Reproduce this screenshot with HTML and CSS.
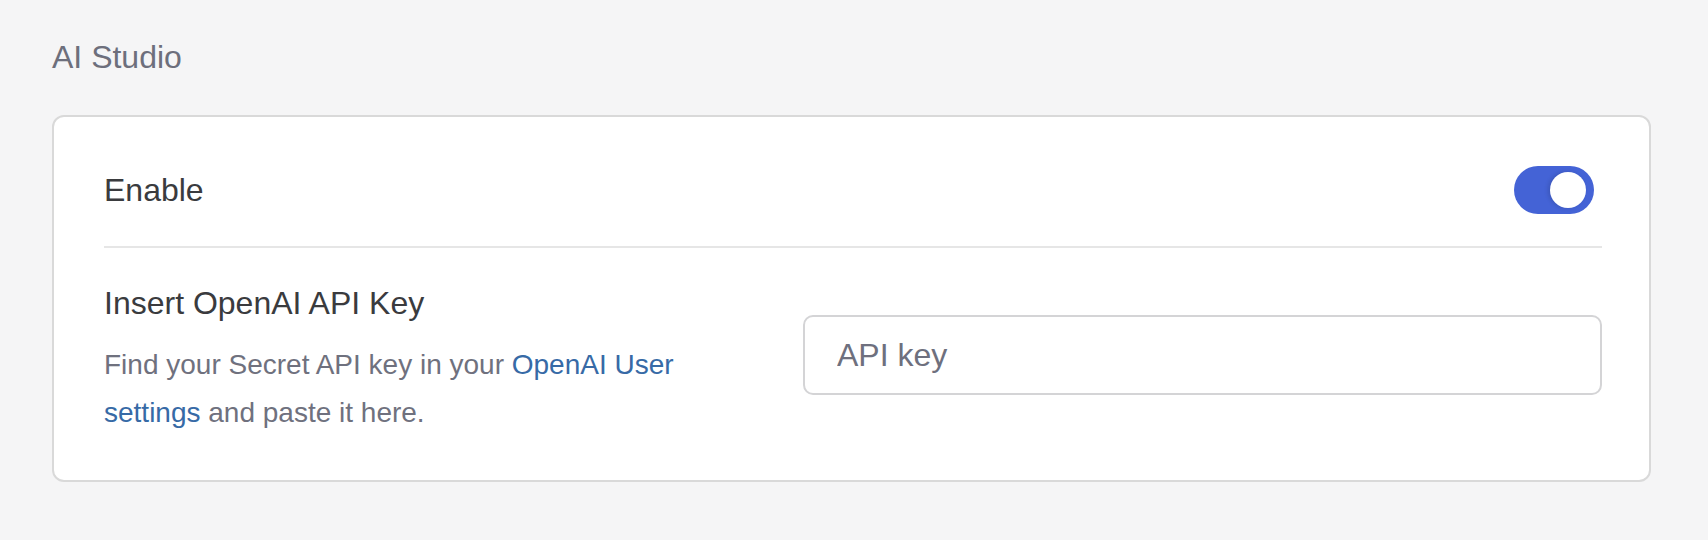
FILE: index.html
```html
<!DOCTYPE html>
<html lang="en">
<head>
  <meta charset="UTF-8">
  <title>AI Studio</title>
  <link rel="stylesheet" href="styles.css">
</head>
<body>

  <h2 class="section-title">AI Studio</h2>

  <div class="card">
    <div class="row row-enable">
      <span class="row-label">Enable</span>
      <label class="toggle on">
        <span class="knob"></span>
      </label>
    </div>

    <div class="row row-key">
      <div class="key-info">
        <h3 class="row-label">Insert OpenAI API Key</h3>
        <p class="hint">Find your Secret API key in your <a href="#">OpenAI User settings</a> and paste it here.</p>
      </div>
      <input class="key-input" type="text" placeholder="API key">
    </div>
  </div>

</body>
</html>
```

FILE: styles.css
```css
body {
  margin: 0;
  padding: 33px 57px 0 52px;
  background: #f5f5f6;
  font-family: "Liberation Sans", Arial, sans-serif;
}
.section-title {
  margin: 0 0 34px;
  font-size: 32px;
  line-height: 48px;
  font-weight: normal;
  color: #6d6f7c;
}
.card {
  background: #fff;
  border: 2px solid #d9d9d9;
  border-radius: 12px;
  padding: 0 47px 0 50px;
}
.row-label {
  margin: 0;
  font-size: 32px;
  line-height: 48px;
  font-weight: normal;
  color: #3a3b3e;
}
.row-enable {
  display: flex;
  align-items: center;
  justify-content: space-between;
  padding: 49px 0 32px;
  border-bottom: 2px solid #e6e6e6;
}
.toggle {
  display: flex;
  justify-content: flex-end;
  align-items: center;
  box-sizing: border-box;
  width: 80px;
  height: 48px;
  padding: 0 8px;
  margin-right: 8px;
  border-radius: 24px;
  background: #4463d6;
  cursor: pointer;
}
.knob {
  width: 36px;
  height: 36px;
  border-radius: 50%;
  background: #fff;
  box-shadow: -2px 0 4px #0002;
}
.row-key {
  display: grid;
  grid-template-columns: 640px 1fr;
  column-gap: 59px;
  align-items: start;
  padding: 31px 0 43px;
}
.row-key .row-label {
  margin-bottom: 14px;
}
.hint {
  margin: 0;
  font-size: 28px;
  line-height: 48px;
  color: #6f717e;
}
.hint a {
  color: #376aa6;
  text-decoration: none;
}
.key-input {
  box-sizing: border-box;
  width: 100%;
  height: 80px;
  margin-top: 36px;
  padding: 0 32px;
  border: 2px solid #d4d4d6;
  border-radius: 10px;
  font-family: inherit;
  font-size: 32px;
  color: #333;
  outline: none;
}
.key-input::placeholder {
  color: #6e707e;
}
```
